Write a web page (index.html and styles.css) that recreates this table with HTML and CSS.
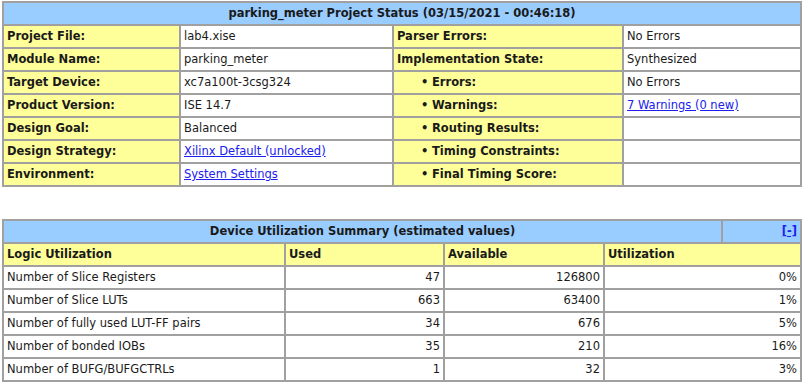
FILE: index.html
```html
<!DOCTYPE html>
<html>
<head>
<meta charset="utf-8">
<link rel="stylesheet" href="styles.css">
</head>
<body>
<table class="grid status">
  <colgroup><col class="s1"><col class="s2"><col class="s3"><col class="s4"></colgroup>
  <tr class="head"><td colspan="4" class="center"><b>parking_meter Project Status (03/15/2021 - 00:46:18)</b></td></tr>
  <tr><td class="lbl">Project File:</td><td>lab4.xise</td><td class="lbl">Parser Errors:</td><td>No Errors</td></tr>
  <tr><td class="lbl">Module Name:</td><td>parking_meter</td><td class="lbl">Implementation State:</td><td>Synthesized</td></tr>
  <tr><td class="lbl">Target Device:</td><td>xc7a100t-3csg324</td><td class="lbl sub"><span class="dot">•</span>Errors:</td><td>No Errors</td></tr>
  <tr><td class="lbl">Product Version:</td><td>ISE 14.7</td><td class="lbl sub"><span class="dot">•</span>Warnings:</td><td><a href="#">7 Warnings (0 new)</a></td></tr>
  <tr><td class="lbl">Design Goal:</td><td>Balanced</td><td class="lbl sub"><span class="dot">•</span>Routing Results:</td><td></td></tr>
  <tr><td class="lbl">Design Strategy:</td><td><a href="#">Xilinx Default (unlocked)</a></td><td class="lbl sub"><span class="dot">•</span>Timing Constraints:</td><td></td></tr>
  <tr><td class="lbl">Environment:</td><td><a href="#">System Settings</a></td><td class="lbl sub"><span class="dot">•</span>Final Timing Score:</td><td></td></tr>
</table>

<table class="grid util">
  <colgroup><col class="u1"><col class="u2"><col class="u3"><col class="u4"><col class="u5"></colgroup>
  <tr class="head"><td colspan="4" class="center"><b>Device Utilization Summary (estimated values)</b></td><td class="right"><a href="#" class="toggle">[-]</a></td></tr>
  <tr class="cols"><td class="lbl">Logic Utilization</td><td class="lbl">Used</td><td class="lbl">Available</td><td class="lbl" colspan="2">Utilization</td></tr>
  <tr><td>Number of Slice Registers</td><td class="right">47</td><td class="right">126800</td><td class="right" colspan="2">0%</td></tr>
  <tr><td>Number of Slice LUTs</td><td class="right">663</td><td class="right">63400</td><td class="right" colspan="2">1%</td></tr>
  <tr><td>Number of fully used LUT-FF pairs</td><td class="right">34</td><td class="right">676</td><td class="right" colspan="2">5%</td></tr>
  <tr><td>Number of bonded IOBs</td><td class="right">35</td><td class="right">210</td><td class="right" colspan="2">16%</td></tr>
  <tr><td>Number of BUFG/BUFGCTRLs</td><td class="right">1</td><td class="right">32</td><td class="right" colspan="2">3%</td></tr>
</table>
</body>
</html>
```
FILE: styles.css
```css
html, body {
  margin: 0;
  background: #ffffff;
}
body {
  padding: 1px 2px 0 2px;
  font-family: "DejaVu Sans", "Liberation Sans", sans-serif;
  font-size: 11.5px;
  color: #1a1a1a;
}
.grid {
  width: 800px;
  table-layout: fixed;
  border-collapse: separate;
  border-spacing: 0;
  border: 1px solid #a0a0a0;
}
.grid td {
  border: 1px solid #a0a0a0;
  padding: 4px 3px;
  line-height: 13px;
  height: 13px;
  white-space: nowrap;
  overflow: hidden;
  background: #ffffff;
  vertical-align: middle;
}
.grid .head td {
  background: #99ccff;
}
.grid td.lbl {
  background: #ffff99;
  font-weight: bold;
}
.grid td.sub {
  padding-left: 30px;
}
.dot {
  display: inline-block;
  width: 11px;
  margin-left: -3px;
}
.center { text-align: center; }
.grid td.right { text-align: right; }
a {
  color: #2020ee;
  text-decoration: underline;
}
a.toggle {
  font-weight: bold;
}
.util {
  margin-top: 32px;
}
.s1 { width: 177px; }
.s2 { width: 213px; }
.s3 { width: 230px; }
.s4 { width: 178px; }
.u1 { width: 282px; }
.u2 { width: 159px; }
.u3 { width: 160px; }
.u4 { width: 118px; }
.u5 { width: 79px; }
```
